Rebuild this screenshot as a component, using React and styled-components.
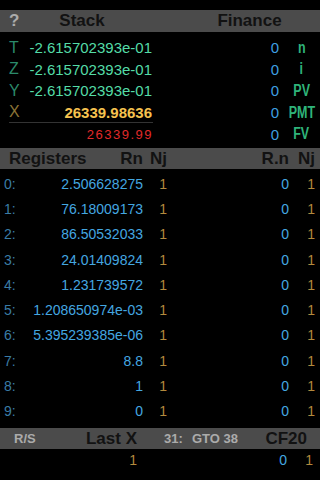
import React from 'react'
import styled, { createGlobalStyle } from 'styled-components'

const GlobalStyle = createGlobalStyle`
  html, body {
    margin: 0;
    padding: 0;
    background: #000;
  }
  body {
    font-family: 'Liberation Sans', Arial, sans-serif;
  }
`

const Screen = styled.div`
  width: 320px;
  height: 480px;
  padding-top: 10px;
  box-sizing: border-box;
  background: #000;
  overflow: hidden;
`

const HeaderBar = styled.div`
  display: grid;
  grid-template-columns: ${props => props.cols};
  align-items: center;
  height: ${props => props.h || 21}px;
  background: #4b4b4b;
  color: #121212;
  font-weight: bold;
  font-size: 17px;
  white-space: pre;
`

const HeadCell = styled.div`
  text-align: ${props => props.align || 'left'};
  padding-left: ${props => props.pl || 0}px;
  padding-right: ${props => props.pr || 0}px;
  color: ${props => props.dim ? '#ababab' : '#121212'};
  font-size: ${props => props.size || 17}px;
`

const SplitCell = styled.div`
  display: flex;
  justify-content: space-between;
  padding-left: ${props => props.pl || 0}px;
`

/* stack + finance */
const StackSection = styled.div`
  display: flex;
  height: 116px;
  padding-top: 5px;
  box-sizing: border-box;
`

const StackCol = styled.div`
  width: 144px;
  margin-left: 9px;
`

const StackRow = styled.div`
  display: flex;
  justify-content: space-between;
  align-items: center;
  height: 21.6px;
  padding-right: 1px;
  font-size: 15px;
  box-sizing: border-box;
  border-bottom: ${props => props.line ? '1px solid #333' : 'none'};
`

const RegName = styled.span`
  color: ${props => props.x ? '#8b7335' : '#2b8a6a'};
  font-size: 16px;
`

const StackValue = styled.span`
  color: ${props => props.x ? '#f6c24f' : '#54dca7'};
  font-weight: ${props => props.x ? 'bold' : 'normal'};
`

const Rounded = styled.span`
  color: #e12a2a;
  font-size: 13px;
  letter-spacing: 1.5px;
  margin-right: -1px;
`

const FinanceCol = styled.div`
  flex: 1;
`

const FinanceRow = styled.div`
  display: grid;
  grid-template-columns: 1fr 41px;
  align-items: center;
  height: 21.6px;
  font-size: 15px;
`

const FinValue = styled.span`
  text-align: right;
  color: #3d9fe0;
`

const FinKey = styled.span`
  display: inline-block;
  justify-self: center;
  margin-left: 4px;
  color: #2fb47a;
  font-weight: bold;
  font-size: 16px;
  transform: scaleX(0.78);
`

/* registers */
const RegList = styled.div`
  padding-top: 2px;
  height: 259px;
  box-sizing: border-box;
`

const RegRow = styled.div`
  display: grid;
  grid-template-columns: 30px 113px 24px 122px 26px;
  align-items: center;
  height: 25.3px;
  font-size: 14px;
`

const Cell = styled.span`
  text-align: ${props => props.align || 'right'};
  padding-left: ${props => props.pl || 0}px;
  color: ${props => props.color};
`

const BottomRow = styled.div`
  display: grid;
  grid-template-columns: 137px 150px 26px;
  align-items: center;
  height: 21px;
  font-size: 14px;
`

const BLUE = '#44a7e0'
const GOLD = '#b38a3d'
const INDEX = '#3a7ca6'

const stack = [
  { name: 'T', value: '-2.615702393e-01', key: 'n' },
  { name: 'Z', value: '-2.615702393e-01', key: 'i' },
  { name: 'Y', value: '-2.615702393e-01', key: 'PV' },
  { name: 'X', value: '26339.98636', key: 'PMT', x: true },
]

const registers = [
  '2.506628275',
  '76.18009173',
  '86.50532033',
  '24.01409824',
  '1.231739572',
  '1.208650974e-03',
  '5.395239385e-06',
  '8.8',
  '1',
  '0',
]

export default function App() {
  return (
    <Screen>
      <GlobalStyle />
      <HeaderBar cols="20px 124px 35px 1fr" h={22}>
        <HeadCell pl={9} dim>?</HeadCell>
        <HeadCell align="center">Stack</HeadCell>
        <span />
        <HeadCell align="center">Finance</HeadCell>
      </HeaderBar>

      <StackSection>
        <StackCol>
          {stack.map(r => (
            <StackRow key={r.name} line={r.x}>
              <RegName x={r.x}>{r.name}</RegName>
              <StackValue x={r.x}>{r.value}</StackValue>
            </StackRow>
          ))}
          <StackRow style={{ justifyContent: 'flex-end' }}>
            <Rounded>26339.99</Rounded>
          </StackRow>
        </StackCol>
        <FinanceCol>
          {[...stack.map(r => r.key), 'FV'].map(k => (
            <FinanceRow key={k}>
              <FinValue>0</FinValue>
              <FinKey>{k}</FinKey>
            </FinanceRow>
          ))}
        </FinanceCol>
      </StackSection>

      <HeaderBar cols="143px 24px 122px 26px">
        <SplitCell pl={9}>
          <span>Registers</span>
          <span>Rn</span>
        </SplitCell>
        <HeadCell align="right">Nj</HeadCell>
        <HeadCell align="right">R.n</HeadCell>
        <HeadCell align="right">Nj</HeadCell>
      </HeaderBar>

      <RegList>
        {registers.map((v, i) => (
          <RegRow key={i}>
            <Cell align="left" pl={4} color={INDEX}>{i}:</Cell>
            <Cell color={BLUE}>{v}</Cell>
            <Cell color={GOLD}>1</Cell>
            <Cell color={BLUE}>0</Cell>
            <Cell color={GOLD}>1</Cell>
          </RegRow>
        ))}
      </RegList>

      <HeaderBar cols="60px 77px 55px 65px 1fr">
        <HeadCell pl={14} size={13} dim>R/S</HeadCell>
        <HeadCell align="right">Last X</HeadCell>
        <HeadCell pl={27} size={13} dim>31:</HeadCell>
        <HeadCell size={13} dim>GTO 38</HeadCell>
        <HeadCell align="right" pr={13}>CF20</HeadCell>
      </HeaderBar>

      <BottomRow>
        <Cell color={GOLD}>1</Cell>
        <Cell color={BLUE}>0</Cell>
        <Cell color={GOLD}>1</Cell>
      </BottomRow>
    </Screen>
  )
}
